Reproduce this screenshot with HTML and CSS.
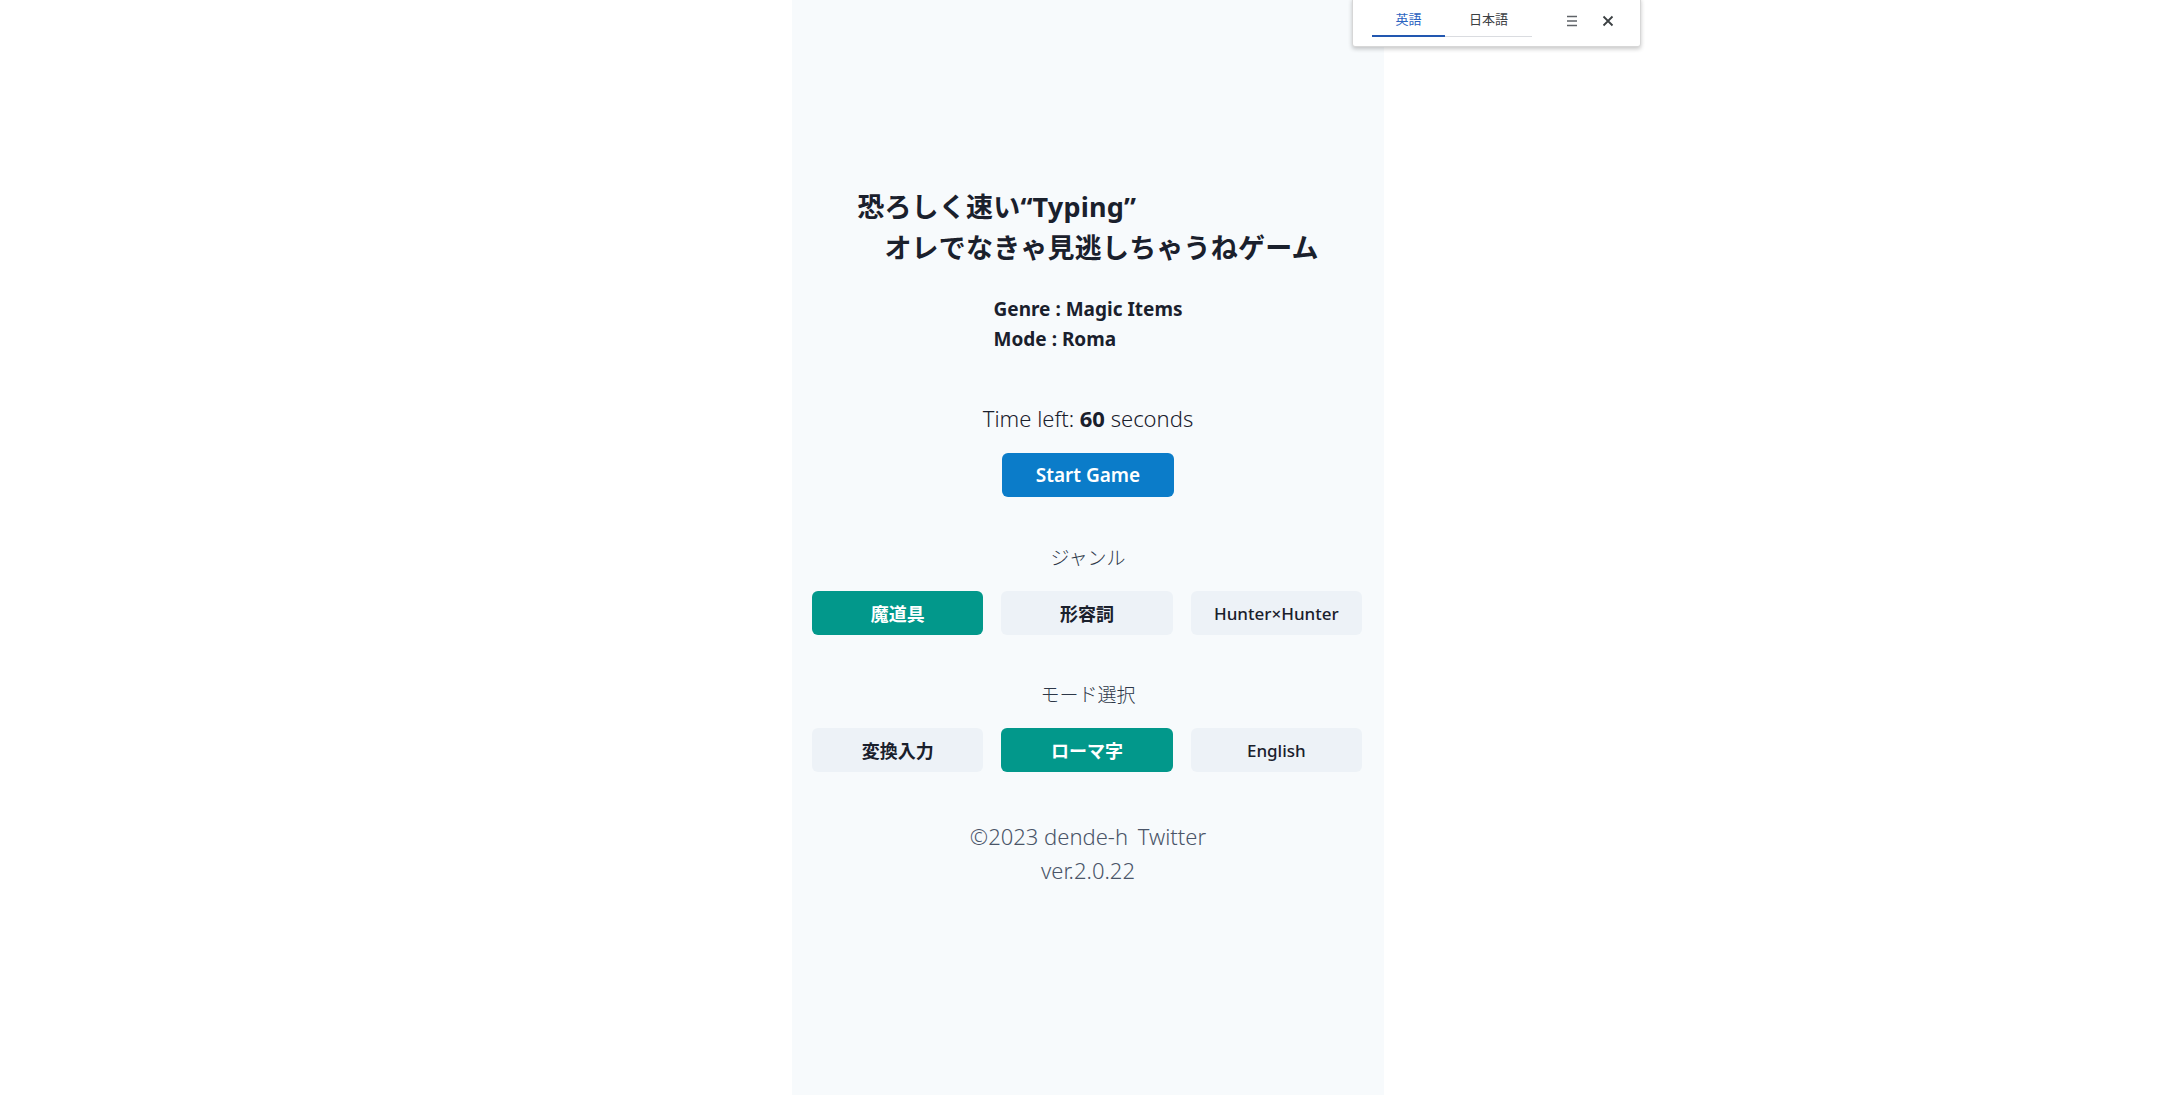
FILE: index.html
```html
<!DOCTYPE html>
<html lang="ja">
<head>
<meta charset="utf-8">
<title>恐ろしく速い“Typing”</title>
<link rel="stylesheet" href="styles.css">
</head>
<body>
<div class="page">
  <main class="panel">
    <div class="title-wrap">
      <h1 class="title">恐ろしく速い“Typing”<br>　オレでなきゃ見逃しちゃうねゲーム</h1>
    </div>
    <div class="info">
      <p>Genre : Magic Items</p>
      <p>Mode : Roma</p>
    </div>
    <p class="timer">Time left: <b>60</b> seconds</p>
    <button class="start">Start Game</button>

    <p class="label">ジャンル</p>
    <div class="choices">
      <button class="choice active">魔道具</button>
      <button class="choice">形容詞</button>
      <button class="choice latin">Hunter×Hunter</button>
    </div>

    <p class="label label-mode">モード選択</p>
    <div class="choices">
      <button class="choice">変換入力</button>
      <button class="choice active">ローマ字</button>
      <button class="choice latin">English</button>
    </div>

    <footer class="footer">
      <p>©2023 dende-h <a class="tw">Twitter</a></p>
      <p>ver.2.0.22</p>
    </footer>
  </main>
</div>

<div class="translate-popup">
  <div class="tabs">
    <span class="tab tab-on">英語</span>
    <span class="tab">日本語</span>
  </div>
  <div class="tools">
    <svg class="ico" width="12" height="12" viewBox="0 0 12 12"><path d="M1 1.5h10M1 6h10M1 10.5h10" stroke="#5f6368" stroke-width="1.5" fill="none"/></svg>
    <svg class="ico" width="12" height="12" viewBox="0 0 12 12"><path d="M1.5 1.5l9 9M10.5 1.5l-9 9" stroke="#3c4043" stroke-width="1.8" fill="none"/></svg>
  </div>
</div>
</body>
</html>
```

FILE: styles.css
```css
* { box-sizing: border-box; }
html, body {
  margin: 0;
  padding: 0;
  background: #ffffff;
}
body {
  font-family: "Noto Sans", "Noto Sans CJK JP", sans-serif;
  color: #1a202c;
  position: relative;
  overflow: hidden;
}
.page {
  display: flex;
  justify-content: center;
  padding-right: 8px;
}
.panel {
  width: 592px;
  min-height: 1095px;
  background: #f7fafc;
  display: flex;
  flex-direction: column;
  align-items: center;
  padding-top: 186px;
}
.title-wrap {
  display: flex;
  justify-content: center;
}
.title {
  margin: 0;
  font-size: 27px;
  line-height: 41px;
  font-weight: 700;
  text-align: left;
  letter-spacing: 0.2px;
}
.info {
  margin-top: 26px;
  font-size: 19px;
  font-weight: 700;
  line-height: 30px;
}
.info p { margin: 0; }
.timer {
  margin: 48px 0 0;
  font-size: 22px;
  line-height: 32px;
  font-weight: 300;
}
.timer b { font-weight: 700; }
.start {
  margin-top: 19px;
  width: 172px;
  height: 44px;
  border: 0;
  border-radius: 6px;
  background: #0b7cc9;
  color: #ffffff;
  font-family: inherit;
  font-size: 19px;
  font-weight: 600;
  padding: 0;
}
.label {
  margin: 46px 0 0;
  font-size: 19px;
  line-height: 30px;
  font-weight: 300;
  color: #2d3748;
}
.label-mode { margin-top: 45px; }
.choices {
  margin-top: 18px;
  width: 100%;
  padding: 0 22px 0 20px;
  display: grid;
  grid-template-columns: repeat(3, 1fr);
  gap: 18px;
}
.choice {
  height: 44px;
  border: 0;
  border-radius: 6px;
  background: #edf2f7;
  color: #1a202c;
  font-family: inherit;
  font-size: 18px;
  font-weight: 700;
  padding: 0;
}
.choice.latin {
  font-weight: 500;
  font-size: 17px;
}
.choice.active {
  background: #02988b;
  color: #ffffff;
}
.footer {
  margin-top: 47px;
  text-align: center;
  font-size: 22px;
  line-height: 34px;
  font-weight: 300;
  color: #4a5568;
}
.footer p { margin: 0; }
.tw { margin-left: 4px; color: inherit; }

.translate-popup {
  position: absolute;
  top: -2px;
  left: 1352px;
  width: 289px;
  height: 49px;
  background: #ffffff;
  border: 1px solid #d7d7d7;
  border-radius: 0 0 3px 3px;
  box-shadow: 0 2px 4px rgba(0,0,0,0.22);
  display: flex;
  align-items: flex-start;
  padding-left: 19px;
  font-family: "Noto Sans CJK JP", sans-serif;
}
.tabs {
  display: flex;
  height: 38px;
}
.tab {
  display: flex;
  align-items: center;
  justify-content: center;
  font-size: 13px;
  color: #3c4043;
  border-bottom: 1px solid #dadce0;
  width: 87px;
  padding-top: 2px;
}
.tab-on {
  width: 73px;
  color: #2b63c1;
  border-bottom: 2px solid #2257b0;
}
.tools {
  margin-left: 34px;
  display: flex;
  gap: 24px;
  padding-top: 16px;
}
.ico { display: block; }
```
